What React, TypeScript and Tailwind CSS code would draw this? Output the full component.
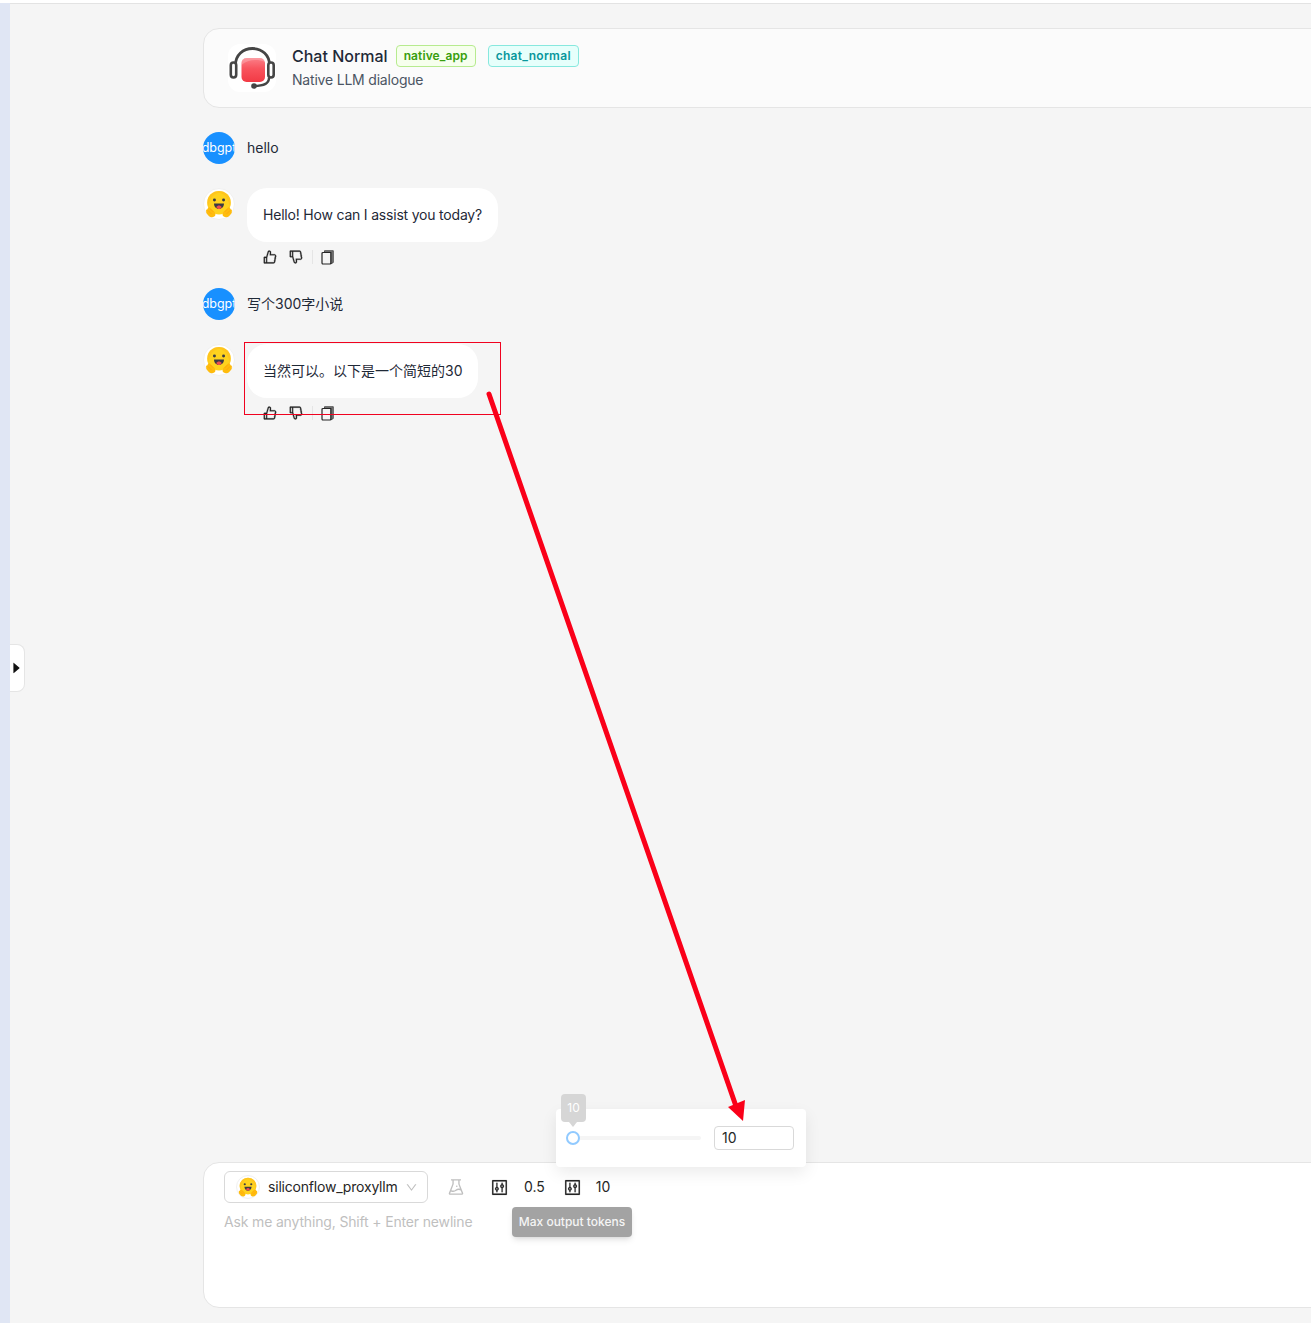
import React from "react";
import { AiOutlineLike, AiOutlineDislike, AiOutlineControl, AiOutlineExperiment, AiOutlineDown, AiFillCaretRight } from "react-icons/ai";

function Hug({ size }: { size: number }) {
  return (
    <svg width={size} height={size} viewBox="0 0 32 32" aria-hidden="true">
      <circle cx="16" cy="14.500" r="13.500" fill="#FFD21E" />
      <path d="M3.500 19C2.500 16 2.500 12 3.500 9.500 5.500 4.500 10 1 16 1s10.500 3.500 12.500 8.500c1 2.500 1 6.500 0 9.500-1-3-1.500-6-3-8.500C23.500 6.500 20 3.500 16 3.500S8.500 6.500 6.500 10.500C5 13 4.500 16 3.500 19z" fill="#FFB81C" opacity="0.5" />
      <circle cx="10.800" cy="11.500" r="1.700" fill="#3A3B45" />
      <circle cx="21.200" cy="11.500" r="1.700" fill="#3A3B45" />
      <path d="M10.300 15.500h11.400c0 3.600-2.500 6.300-5.700 6.300s-5.700-2.700-5.700-6.300z" fill="#3A3B45" />
      <path d="M12.800 19.500c.8-1.200 2-1.800 3.200-1.800s2.400.6 3.200 1.800c-.8 1.500-2 2.300-3.200 2.300s-2.400-.8-3.200-2.300z" fill="#EF4E4E" />
      <path d="M1.500 25c-.8-1.800.2-3.400 1.400-3.100.3-1.900 2-2.700 3-1.500l5 4.600c1.500 1.600 1.400 4-.3 5.300-2 1.400-4.500 1-6-.4l-2.700-3c-.6-.7-.7-1.700-.4-2.400z" fill="#FFBC0D" />
      <path d="M30.500 25c.8-1.800-.2-3.400-1.400-3.100-.3-1.900-2-2.700-3-1.500l-5 4.600c-1.500 1.600-1.400 4 .3 5.300 2 1.400 4.500 1 6-.4l2.700-3c.6-.7.7-1.700.4-2.400z" fill="#FFBC0D" />
      <path d="M3.500 23.500l4 4M6 21.500l3.500 3.500M28.500 23.500l-4 4M26 21.500l-3.500 3.500" stroke="#FF9D0B" strokeWidth="0.7" fill="none" />
    </svg>
  );
}

function Copy() {
  return (
    <svg width="13" height="15" viewBox="0 0 13 15" aria-hidden="true">
      <path d="M3.500 .7h8.800v11.800L9.800 14V2.500H3.500z" fill="#7a7a7a" stroke="#262626" strokeWidth="0.7" />
      <path d="M2 2.500h7.800V13a1 1 0 0 1-1 1H2a1 1 0 0 1-1-1V3.500a1 1 0 0 1 1-1z" fill="#f5f5f5" stroke="#262626" strokeWidth="1.200" />
    </svg>
  );
}

function Logo() {
  return (
    <div className="flex h-12 w-12 items-center justify-center rounded-xl bg-white">
      <svg width="48" height="48" viewBox="0 0 48 48" aria-hidden="true">
        <defs>
          <linearGradient id="redg" x1="0" y1="0" x2="0" y2="1">
            <stop offset="0" stopColor="#fb7f88" />
            <stop offset="0.45" stopColor="#f8535d" />
            <stop offset="1" stopColor="#f23a45" />
          </linearGradient>
        </defs>
        <path d="M7.500 21C7.500 11 15 4.500 24.500 4.500S41.500 11 41.500 21" fill="none" stroke="#454545" strokeWidth="2.800" />
        <rect x="2.800" y="18.500" width="5.400" height="15" rx="2.700" fill="#fff" stroke="#454545" strokeWidth="2.600" />
        <rect x="40.300" y="18.500" width="5.400" height="15" rx="2.700" fill="#fff" stroke="#454545" strokeWidth="2.600" />
        <rect x="13.500" y="14" width="23.500" height="24" rx="5" fill="url(#redg)" />
        <path d="M13.500 21c6-5 15-6.500 23.500-3v-1c0-2-1.500-3-4-3H18c-3 0-4.500 2-4.500 7z" fill="#ffffff" fillOpacity="0.22" />
        <path d="M41 34c0 5-5 8-15 8" fill="none" stroke="#454545" strokeWidth="2.400" />
        <circle cx="26" cy="42" r="2.800" fill="#454545" />
      </svg>
    </div>
  );
}

function Avatar() {
  return (
    <div className="flex h-8 w-8 shrink-0 items-center justify-center overflow-hidden rounded-full bg-[#1890ff] text-[12.5px] leading-8 text-white">
      dbgpt
    </div>
  );
}

function HugAvatar() {
  return (
    <div className="flex h-8 w-8 shrink-0 items-center justify-center rounded-full border border-[#f0f0f0] bg-white">
      <Hug size={28} />
    </div>
  );
}

function UserRow({ text }: { text: string }) {
  return (
    <div className="flex h-8 items-center gap-3 text-sm text-[#1f2937]">
      <Avatar />
      <span>{text}</span>
    </div>
  );
}

function BotRow({ text, latin }: { text: string; latin?: boolean }) {
  return (
    <div className="flex gap-3">
      <HugAvatar />
      <div>
        <div className={latin ? "w-fit rounded-[20px] bg-white p-4 text-sm leading-[22px] tracking-[-0.2px] text-[#1f2937]" : "w-fit rounded-[20px] bg-white p-4 text-sm leading-[22px] text-[#1f2937]"}>{text}</div>
        <div className="mt-2 flex h-3.5 items-center pl-[15px] text-[#262626]">
          <AiOutlineLike size={16} stroke="currentColor" strokeWidth={16} />
          <AiOutlineDislike size={16} stroke="currentColor" strokeWidth={16} className="ml-[10px]" />
          <span className="ml-[8px] h-3.5 w-px bg-[#e5e5e5]" />
          <span className="ml-[8px] flex"><Copy /></span>
        </div>
      </div>
    </div>
  );
}

export default function App() {
  return (
    <div className="relative flex h-[1323px] w-full overflow-hidden bg-white font-['Inter','Noto_Sans_CJK_SC',sans-serif]">
      <div className="mt-[3px] w-[10px] shrink-0 bg-[#e0e6f4]" />
      <main className="mt-[3px] flex min-w-0 flex-1 flex-col border-t border-[#e3e3e3] bg-[#f5f5f5] pb-[15px] pl-[193px] pt-6">
        <header className="flex h-20 w-[1200px] items-center gap-4 rounded-tl-2xl rounded-bl-2xl border border-[#e5e5e5] bg-[#fbfbfb] pl-6">
          <Logo />
          <div className="pb-[2px]">
            <div className="flex items-center">
              <span className="text-base font-medium leading-6 text-[#1f2937]">Chat Normal</span>
              <span className="ml-2 rounded border border-[#b7eb8f] bg-[#f6ffed] px-[7px] text-xs font-semibold leading-5 tracking-[0.1px] text-[#389e0d]">native_app</span>
              <span className="ml-3 rounded border border-[#87e8de] bg-[#e6fffb] px-[7px] text-xs font-semibold leading-5 tracking-[0.3px] text-[#08979c]">chat_normal</span>
            </div>
            <div className="mt-[2px] text-sm leading-5 tracking-[-0.2px] text-[#4b5563]">Native LLM dialogue</div>
          </div>
        </header>

        <section className="mt-6 flex flex-1 flex-col gap-6">
          <UserRow text="hello" />
          <BotRow text="Hello! How can I assist you today?" latin />
          <UserRow text="写个300字小说" />
          <BotRow text="当然可以。以下是一个简短的30" />
        </section>

        <footer className="h-[146px] w-[1200px] rounded-tl-2xl rounded-bl-2xl border border-[#e5e5e5] bg-white pl-5 pt-2">
          <div className="flex h-8 items-center text-sm text-[#1f2937]">
            <div className="flex h-8 w-[204px] items-center rounded-md border border-[#d9d9d9] pl-[11px]">
              <span className="flex h-6 w-6 items-center justify-center rounded-full border border-[#f0f0f0]"><Hug size={20} /></span>
              <span className="ml-2 tracking-[-0.2px] text-[#262626]">siliconflow_proxyllm</span>
              <AiOutlineDown size={13} className="ml-[7px] text-[#bfbfbf]" />
            </div>
            <AiOutlineExperiment size={20} className="ml-[18px] text-[#bfbfbf]" />
            <AiOutlineControl size={19} stroke="currentColor" strokeWidth={8} className="ml-[24px] text-[#262626]" />
            <span className="ml-[15px] text-[#262626]">0.5</span>
            <AiOutlineControl size={19} stroke="currentColor" strokeWidth={8} className="ml-[18px] text-[#262626]" />
            <span className="ml-[14px] text-[#262626]">10</span>
          </div>
          <div className="mt-2 text-sm leading-[22px] tracking-[-0.16px] text-[#bfbfbf]">Ask me anything, Shift + Enter newline</div>
        </footer>
      </main>

      <div className="absolute left-[10px] top-[644px] flex h-12 w-[15px] items-center rounded-r-lg border border-l-0 border-[#e5e5e5] bg-white">
        <AiFillCaretRight size={18} className="ml-[-1px] text-[#111]" />
      </div>

      <div className="absolute left-[512px] top-[1207px] flex h-[30px] w-[120px] items-center justify-center rounded bg-[#a3a3a3] text-xs font-medium text-[#f5f5f5] shadow-md">
        Max output tokens
      </div>

      <div className="absolute left-[556px] top-[1109px] flex h-[58px] w-[250px] items-center rounded bg-white pb-[1px] pl-[10px] shadow-[0_6px_16px_rgba(0,0,0,0.08)]">
        <div className="relative flex h-1 w-[135px] items-center rounded bg-[#f5f5f5]">
          <span className="h-[14px] w-[14px] rounded-full border-2 border-[#91caff] bg-white" />
          <div className="absolute left-[-5px] top-[-42px] flex h-7 w-[25px] items-center justify-center rounded bg-[#d6d6d6] text-xs text-white">10</div>
          <span className="absolute left-[3px] top-[-14px] h-0 w-0 border-x-[4px] border-t-[5px] border-x-transparent border-t-[#d6d6d6]" />
        </div>
        <div className="ml-[13px] flex h-6 w-20 items-center rounded border border-[#d9d9d9] pl-[7px] text-sm text-[#262626]">10</div>
      </div>

      <div className="pointer-events-none absolute left-[244px] top-[342px] h-[73px] w-[257px] border border-[#f0021f]" />

      <svg className="pointer-events-none absolute left-0 top-0" width="1311" height="1323" viewBox="0 0 1311 1323" aria-hidden="true">
        <path d="M489 394 L738 1112" stroke="#fa0019" strokeWidth="5" strokeLinecap="round" fill="none" />
        <path d="M743 1121 L728 1107 L745 1100 Z" fill="#fa0019" />
      </svg>
    </div>
  );
}
